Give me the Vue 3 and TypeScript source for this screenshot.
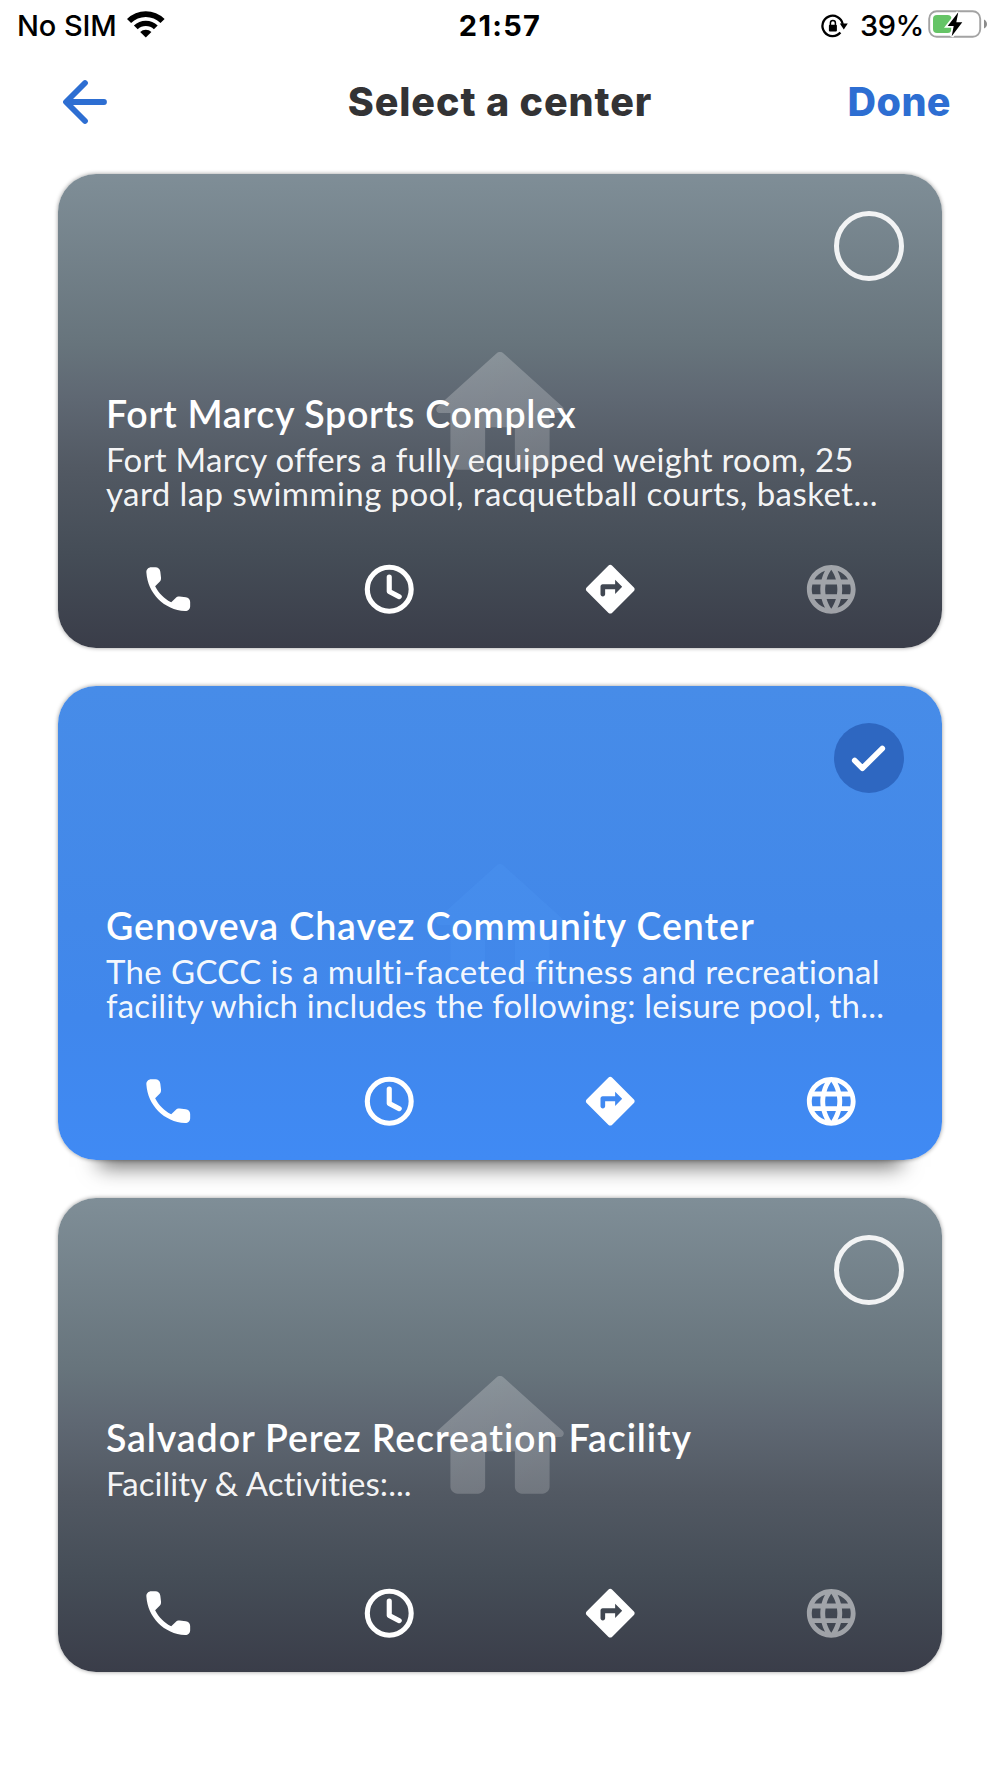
<script setup lang="ts">
interface Line {
  text: string
  spacing: number
}
interface Center {
  title: Line
  lines: Line[]
  selected: boolean
  hasSite: boolean
}

const centers: Center[] = [
  {
    title: { text: 'Fort Marcy Sports Complex', spacing: 0.71 },
    lines: [
      { text: 'Fort Marcy offers a fully equipped weight room, 25', spacing: 0.27 },
      { text: 'yard lap swimming pool, racquetball courts, basket...', spacing: 0.43 },
    ],
    selected: false,
    hasSite: false,
  },
  {
    title: { text: 'Genoveva Chavez Community Center', spacing: 0.95 },
    lines: [
      { text: 'The GCCC is a multi-faceted fitness and recreational', spacing: 0.36 },
      { text: 'facility which includes the following: leisure pool, th...', spacing: 0.19 },
    ],
    selected: true,
    hasSite: true,
  },
  {
    title: { text: 'Salvador Perez Recreation Facility', spacing: 0.89 },
    lines: [{ text: 'Facility & Activities:...', spacing: 0.03 }],
    selected: false,
    hasSite: false,
  },
]
</script>

<template>
  <main class="screen">
    <header class="status">
      <div class="status-left">
        <span class="carrier">No SIM</span>
        <svg class="wifi" viewBox="0 0 38 28" width="38" height="28">
          <path d="M0 8.9A26.7 26.7 0 0 1 37.6 8.9L33.5 13A20.9 20.9 0 0 0 4.1 13Z" />
          <path d="M6.9 15.4A17.3 17.3 0 0 1 30.7 15.4L26.9 19.3A11.6 11.6 0 0 0 10.7 19.3Z" />
          <path d="M13.2 21.9A8.1 8.1 0 0 1 24.4 21.9L18.8 27.6Z" />
        </svg>
      </div>
      <span class="time">21:57</span>
      <div class="status-right">
        <svg class="lock" viewBox="0 0 28 26" width="28" height="26">
          <path d="M22.700 11A10.200 10.200 0 1 0 20.400 19.600" fill="none" stroke="#000" stroke-width="2.300" />
          <path d="M19.800 10.600h8l-4 6z" />
          <rect x="8.900" y="11.700" width="8" height="6.800" rx="1" />
          <path d="M10.400 12.500V10a2.500 2.500 0 0 1 5 0v2.500" fill="none" stroke="#000" stroke-width="1.500" />
        </svg>
        <span class="percent">39%</span>
        <svg class="battery" viewBox="0 0 62 32" width="62" height="32">
          <rect x="2.200" y="3.200" width="51" height="25.600" rx="7.500" fill="#fff" stroke="#a3a3a3" stroke-width="1.900" />
          <rect x="6" y="7" width="18.500" height="18" rx="4" fill="#65c466" />
          <path d="M57 11.400c1.800.9 3 2.600 3 4.600s-1.200 3.700-3 4.600z" fill="#8c8c8c" />
          <path d="M31.300 4.300L20.700 18h6l-2 10.300L35.300 14.300h-6z" fill="#000" stroke="#fff" stroke-width="3.600" paint-order="stroke" />
        </svg>
      </div>
    </header>

    <nav class="nav">
      <svg class="back" viewBox="0 0 48 48" width="48" height="48">
        <path d="M24 5L5 24l19 19M5.500 24H43" fill="none" stroke="currentColor" stroke-width="5.800" stroke-linecap="round" stroke-linejoin="round" />
      </svg>
      <h1 class="heading">Select a center</h1>
      <span class="done">Done</span>
    </nav>

    <section class="list">
      <article v-for="c in centers" :key="c.title.text" class="card" :class="{ selected: c.selected }">
        <svg class="home" viewBox="0 0 24 24" width="170" height="170">
          <defs>
            <linearGradient id="homeFill" x1="0.200" y1="0" x2="0.700" y2="1">
              <stop offset="0" stop-color="#fff" stop-opacity="0.240" />
              <stop offset="1" stop-color="#fff" stop-opacity="0.180" />
            </linearGradient>
          </defs>
          <path d="M9.900 19v-5h4.200v5c0 .55.45 1 1 1h2.900c.55 0 1-.45 1-1v-7h1.500c.46 0 .68-.57.33-.87L12.500 3.600c-.3-.28-.7-.28-1 0L3.170 11.130c-.34.3-.13.87.33.87H5v7c0 .55.45 1 1 1h2.900c.55 0 1-.45 1-1z" />
        </svg>

        <div class="radio">
          <svg v-if="c.selected" viewBox="0 0 70 70" width="70" height="70">
            <path d="M20.700 37.500l7.700 7.700L48.300 25.500" fill="none" stroke="#fff" stroke-width="5.600" stroke-linecap="round" stroke-linejoin="round" />
          </svg>
        </div>

        <div class="copy">
          <h2 class="title" :style="{ letterSpacing: c.title.spacing + 'px' }">{{ c.title.text }}</h2>
          <p class="desc">
            <span v-for="l in c.lines" :key="l.text" class="line" :style="{ letterSpacing: l.spacing + 'px' }">{{ l.text }}</span>
          </p>
        </div>

        <div class="actions">
          <svg class="icon" viewBox="0 0 24 24">
            <path d="M19.230 15.260l-2.540-.29c-.61-.07-1.210.14-1.640.57l-1.840 1.840c-2.830-1.440-5.150-3.750-6.590-6.590l1.850-1.850c.43-.43.64-1.030.57-1.640l-.29-2.520c-.12-1.010-.97-1.770-1.990-1.770H5.030c-1.130 0-2.070.94-2 2.070.53 8.540 7.360 15.360 15.890 15.890 1.130.07 2.070-.87 2.070-2v-1.730c.01-1.010-.75-1.860-1.760-1.980z" />
          </svg>
          <svg class="icon" viewBox="0 0 24 24">
            <g fill="none" stroke="currentColor" stroke-width="2.100">
              <circle cx="12" cy="12" r="9" />
              <path d="M12 6.950V12.900l4.100 2.150" stroke-linecap="round" stroke-linejoin="round" />
            </g>
          </svg>
          <svg class="icon" viewBox="0 0 24 24">
            <path fill-rule="evenodd" d="M21.710 11.290l-9-9c-.39-.39-1.020-.39-1.410 0l-9 9c-.39.39-.39 1.020 0 1.410l9 9c.39.39 1.020.39 1.410 0l9-9c.39-.38.39-1.010 0-1.410zM14 13.900V12H9.900v2.100c0 .5-.4.900-.950.900s-.950-.4-.950-.900v-3.200c0-.55.35-.95.900-.95H14V8.100L16.900 11z" />
          </svg>
          <svg class="icon" :class="{ off: !c.hasSite }" viewBox="0 0 24 24">
            <path d="M11.990 2C6.470 2 2 6.480 2 12s4.470 10 9.990 10C17.520 22 22 17.520 22 12S17.520 2 11.990 2zm6.930 6h-2.950c-.32-1.250-.78-2.450-1.380-3.560 1.840.63 3.370 1.910 4.330 3.560zM12 4.040c.83 1.200 1.480 2.530 1.910 3.960h-3.820c.43-1.430 1.080-2.760 1.910-3.960zM4.260 14C4.100 13.360 4 12.690 4 12s.1-1.360.26-2h3.380c-.08.66-.14 1.320-.14 2 0 .68.06 1.340.14 2H4.260zm.82 2h2.950c.32 1.250.78 2.450 1.380 3.560-1.840-.63-3.370-1.900-4.330-3.560zm2.950-8H5.080c.96-1.660 2.490-2.930 4.330-3.560C8.810 5.550 8.350 6.750 8.030 8zM12 19.960c-.83-1.200-1.480-2.530-1.910-3.960h3.820c-.43 1.430-1.080 2.760-1.910 3.960zM14.340 14H9.660c-.09-.66-.16-1.320-.16-2 0-.68.07-1.350.16-2h4.680c.09.65.16 1.320.16 2 0 .68-.07 1.340-.16 2zm.25 5.560c.6-1.110 1.060-2.310 1.380-3.560h2.950c-.96 1.650-2.490 2.930-4.330 3.560zM16.360 14c.08-.66.14-1.320.14-2 0-.68-.06-1.340-.14-2h3.380c.16.64.26 1.310.26 2s-.1 1.360-.26 2h-3.380z" />
          </svg>
        </div>
      </article>
    </section>
  </main>
</template>

<style>
body {
  margin: 0;
  background: #fff;
}
</style>

<style scoped>
.screen {
  width: 1000px;
  height: 1778px;
  overflow: hidden;
  background: #fff;
  font-family: Inter, 'Liberation Sans', sans-serif;
}
h1,
h2,
p {
  margin: 0;
}
svg {
  display: block;
  flex: none;
}

.status {
  display: grid;
  grid-template-columns: 1fr auto 1fr;
  align-items: center;
  height: 52px;
  box-sizing: border-box;
  padding: 0 11px;
  font-size: 29px;
  line-height: 52px;
  font-weight: 500;
  color: #000;
}
.status-left,
.status-right {
  display: flex;
  align-items: center;
}
.status-left {
  padding-left: 6px;
}
.status-right {
  justify-content: flex-end;
}
.carrier {
  letter-spacing: -0.1px;
}
.wifi {
  margin: -5px 0 0 10px;
}
.time {
  font-weight: 700;
  letter-spacing: 1.3px;
}
.lock {
  margin-right: 12px;
}
.percent {
  letter-spacing: -0.4px;
}
.battery {
  margin: -4px 0 0 3px;
}

.nav {
  display: grid;
  grid-template-columns: 1fr auto 1fr;
  align-items: center;
  height: 99px;
  padding: 0 49px;
  color: #2d6ed2;
  font-size: 39.5px;
  font-weight: 800;
}
.back {
  margin-left: 11.5px;
}
.heading {
  font-size: 39.5px;
  font-weight: 800;
  letter-spacing: 0.9px;
  color: #333335;
}
.done {
  justify-self: end;
  letter-spacing: 0.4px;
}

.list {
  display: flex;
  flex-direction: column;
  gap: 38.5px;
  padding: 23px 58px 0;
}
.card {
  position: relative;
  height: 473.5px;
  box-sizing: border-box;
  padding-top: 218px;
  border-radius: 38px;
  color: #fff;
  background: linear-gradient(180deg, #7f8e97 0%, #67747c 36%, #5f6873 47%, #525963 62%, #454d57 80%, #3a3d49 100%);
  box-shadow: 0 0 4px rgba(0, 0, 0, 0.4);
}
.card.selected {
  background: linear-gradient(180deg, #478ce8 0%, #4288e9 50%, #4087ec 70%, #408af4 100%);
  box-shadow: 0 0 4px rgba(0, 0, 0, 0.4), 0 48px 20px -41px rgba(0, 0, 0, 0.56);
}
.home {
  position: absolute;
  top: 154px;
  left: 357px;
  fill: url(#homeFill);
}
.selected .home {
  fill: rgba(90, 160, 255, 0.16);
}
.radio {
  position: absolute;
  top: 37px;
  right: 38px;
  width: 70px;
  height: 70px;
  box-sizing: border-box;
  border: 5px solid rgba(255, 255, 255, 0.9);
  border-radius: 50%;
}
.selected .radio {
  border: 0;
  background: #2e67c1;
}

.copy {
  position: relative;
  height: 168px;
  padding-left: 48px;
  font-family: Lato, 'Open Sans', sans-serif;
  font-variant-ligatures: none;
  white-space: nowrap;
}
.title {
  font-size: 37.5px;
  line-height: 44px;
  font-weight: 600;
}
.desc {
  display: flex;
  flex-direction: column;
  align-items: flex-start;
  margin-top: 6px;
  font-size: 33px;
  line-height: 34px;
  color: rgba(255, 255, 255, 0.96);
}
.actions {
  display: grid;
  grid-template-columns: repeat(4, 1fr);
  justify-items: center;
}
.icon {
  width: 58.5px;
  height: 58.5px;
  color: #fff;
  fill: currentColor;
}
.off {
  opacity: 0.5;
}
</style>
